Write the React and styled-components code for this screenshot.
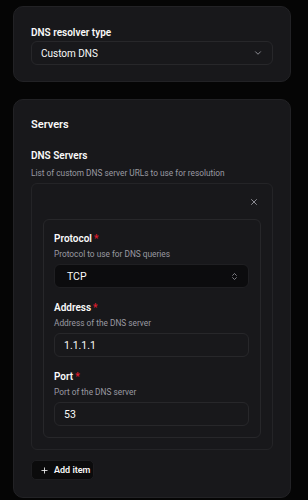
import React from "react";
import styled, { createGlobalStyle } from "styled-components";
import { ChevronDown, ChevronsUpDown, X, Plus } from "lucide-react";

const GlobalStyle = createGlobalStyle`
  body {
    margin: 0;
    background: #050505;
    font-family: Roboto, "Noto Sans", sans-serif;
    color: #fafafa;
  }
`;

const Page = styled.div`
  display: flex;
  flex-direction: column;
  gap: 17px;
  padding: 6px 17px 0 13px;
`;

const Card = styled.section`
  background: #18181b;
  border: 1px solid #222225;
  border-radius: 10px;
  padding: ${(p) => p.pad || "16px"};
  display: flex;
  flex-direction: column;
`;

const Heading = styled.h2`
  margin: 0 0 14px;
  font-size: 11px;
  line-height: 18px;
  font-weight: 600;
`;

const Label = styled.div`
  font-size: 10px;
  line-height: 16px;
  font-weight: 600;
  margin-bottom: ${(p) => p.mb || "0"};
  color: #fafafa;
`;

const Req = styled.span`
  color: #e11d2e;
  margin-left: 2px;
`;

const Desc = styled.div`
  font-size: 8.3px;
  line-height: 14px;
  color: #9a9aa2;
  margin-bottom: 3px;
  white-space: nowrap;
`;

const Box = styled.div`
  height: 24px;
  box-sizing: border-box;
  border: 1px solid ${(p) => (p.dark ? "#1f1f22" : "#27272a")};
  background: ${(p) => (p.dark ? "#0c0c0e" : "#18181b")};
  border-radius: 6px;
  display: flex;
  align-items: center;
  justify-content: space-between;
  padding: 0 ${(p) => p.pr || "12px"} 0 ${(p) => p.pl || "9px"};
  font-size: ${(p) => p.fs || "10.5px"};
  color: #fafafa;
`;

const ListBox = styled.div`
  border: 1px solid #242427;
  border-radius: 6px;
  padding: 8px 11px 11px 11px;
  display: flex;
  flex-direction: column;
`;

const ItemHead = styled.div`
  height: 20px;
  display: flex;
  align-items: center;
  justify-content: flex-end;
  padding-right: 2px;
  margin-bottom: 7px;
  color: #a1a1aa;
`;

const ItemBox = styled.div`
  border: 1px solid #27272a;
  border-radius: 6px;
  padding: 11px 11px 11px 10px;
  display: flex;
  flex-direction: column;
  gap: 12px;
`;

const Field = styled.div`
  display: flex;
  flex-direction: column;
`;

const AddButton = styled.button`
  align-self: flex-start;
  margin-top: 10px;
  height: 20px;
  width: 63px;
  box-sizing: border-box;
  background: #0b0b0c;
  border: 1px solid #1d1d20;
  border-radius: 5px;
  color: #fafafa;
  font-family: inherit;
  font-size: 9px;
  font-weight: 600;
  white-space: nowrap;
  display: flex;
  align-items: center;
  gap: 5px;
  padding: 0 0 0 8px;
`;

const fields = [
  { label: "Protocol", desc: "Protocol to use for DNS queries", value: "TCP", select: true },
  { label: "Address", desc: "Address of the DNS server", value: "1.1.1.1" },
  { label: "Port", desc: "Port of the DNS server", value: "53" },
];

export default function App() {
  return (
    <>
      <GlobalStyle />
      <Page>
        <Card pad="18px 17px 16px">
          <Label>DNS resolver type</Label>
          <Box fs="10px" pr="9px">
            <span>Custom DNS</span>
            <ChevronDown size={10} color="#a1a1aa" />
          </Box>
        </Card>
        <Card pad="16px 17px 17px">
          <Heading>Servers</Heading>
          <Label mb="2px">DNS Servers</Label>
          <Desc>List of custom DNS server URLs to use for resolution</Desc>
          <ListBox>
            <ItemHead>
              <X size={10} />
            </ItemHead>
            <ItemBox>
              {fields.map((f) => (
                <Field key={f.label}>
                  <Label>
                    {f.label}
                    <Req>*</Req>
                  </Label>
                  <Desc>{f.desc}</Desc>
                  {f.select ? (
                    <Box dark pl="12px" pr="9px">
                      <span>{f.value}</span>
                      <ChevronsUpDown size={9} color="#a1a1aa" />
                    </Box>
                  ) : (
                    <Box>{f.value}</Box>
                  )}
                </Field>
              ))}
            </ItemBox>
          </ListBox>
          <AddButton>
            <Plus size={9} strokeWidth={2.2} />
            Add item
          </AddButton>
        </Card>
      </Page>
    </>
  );
}
